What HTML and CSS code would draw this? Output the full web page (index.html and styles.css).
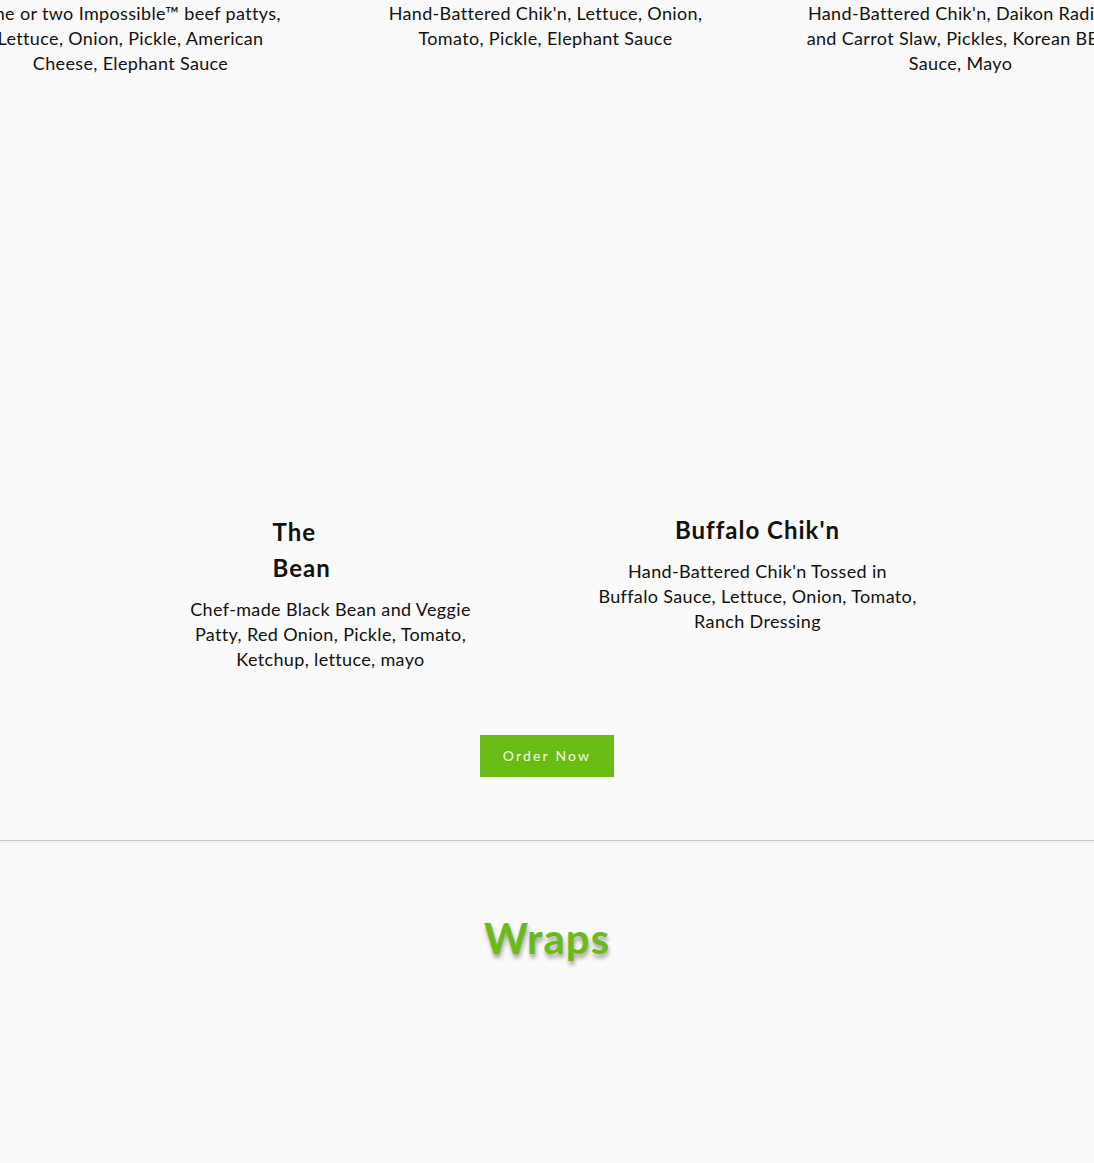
FILE: index.html
```html
<!DOCTYPE html>
<html lang="en">
<head>
    <meta charset="UTF-8">
    <title>Menu</title>
    <link rel="stylesheet" href="styles.css">
</head>
<body>
    <div class="menu">
        <div class="row row-top">
            <div class="item">
                <p class="desc">One or two Impossible™ beef pattys, Lettuce, Onion, Pickle, American Cheese, Elephant Sauce</p>
            </div>
            <div class="item">
                <p class="desc">Hand-Battered Chik'n, Lettuce, Onion, Tomato, Pickle, Elephant Sauce</p>
            </div>
            <div class="item">
                <p class="desc">Hand-Battered Chik'n, Daikon Radish and Carrot Slaw, Pickles, Korean BBQ Sauce, Mayo</p>
            </div>
        </div>

        <div class="row row-two">
            <div class="item">
                <div class="photo"></div>
                <h3 class="title narrow">The Bean</h3>
                <p class="desc">Chef-made Black Bean and Veggie Patty, Red Onion, Pickle, Tomato, Ketchup, lettuce, mayo</p>
            </div>
            <div class="item">
                <div class="photo"></div>
                <h3 class="title">Buffalo Chik'n</h3>
                <p class="desc">Hand-Battered Chik'n Tossed in Buffalo Sauce, Lettuce, Onion, Tomato, Ranch Dressing</p>
            </div>
        </div>

        <div class="order">
            <a class="btn" href="#">Order Now</a>
        </div>
    </div>

    <div class="section">
        <h2 class="heading">Wraps</h2>
    </div>
</body>
</html>
```

FILE: styles.css
```css
* {
    margin: 0;
    padding: 0;
    box-sizing: border-box;
}
body {
    background-color: #fafafa;
    color: #111;
    font-family: "Lato", "Liberation Sans", sans-serif;
    overflow: hidden;
}
.menu {
    border-bottom: 1px solid #c8c8c8;
    box-shadow: 0 2px 0 #f0f0f0;
    padding-bottom: 63px;
}
.row {
    display: flex;
    justify-content: center;
}
.item {
    flex-shrink: 0;
    display: flex;
    flex-direction: column;
    align-items: center;
}
.row-top {
    height: 75px;
    padding-right: 3px;
}
.row-top .item {
    width: 415px;
}
.row-top .desc {
    margin-top: 1px;
}
.row-two {
    padding-right: 6px;
}
.row-two .item {
    width: 427px;
}
.photo {
    height: 439px;
}
.desc {
    width: 322px;
    font-size: 18px;
    line-height: 25px;
    letter-spacing: 0.35px;
    text-align: center;
}
.title {
    font-size: 24px;
    line-height: 36px;
    font-weight: bold;
    letter-spacing: 1px;
    margin-bottom: 11px;
    text-align: center;
}
.row-two .item:last-child .title {
    margin-top: -2px;
}
.title.narrow {
    width: 70px;
    text-align: left;
    margin-left: -46px;
}
.order {
    display: flex;
    justify-content: center;
    margin-top: 63px;
}
.btn {
    display: block;
    width: 134px;
    height: 42px;
    line-height: 42px;
    text-align: center;
    background-color: #6abb14;
    color: #f2f8ea;
    font-size: 14px;
    letter-spacing: 2.2px;
    text-decoration: none;
}
.section {
    height: 322px;
    padding-top: 73px;
}
.heading {
    text-align: center;
    color: #6abb18;
    font-size: 42px;
    line-height: 48px;
    letter-spacing: 1px;
    font-weight: bold;
    text-shadow: 1px 4px 4px rgba(0, 0, 0, 0.35);
}
```
